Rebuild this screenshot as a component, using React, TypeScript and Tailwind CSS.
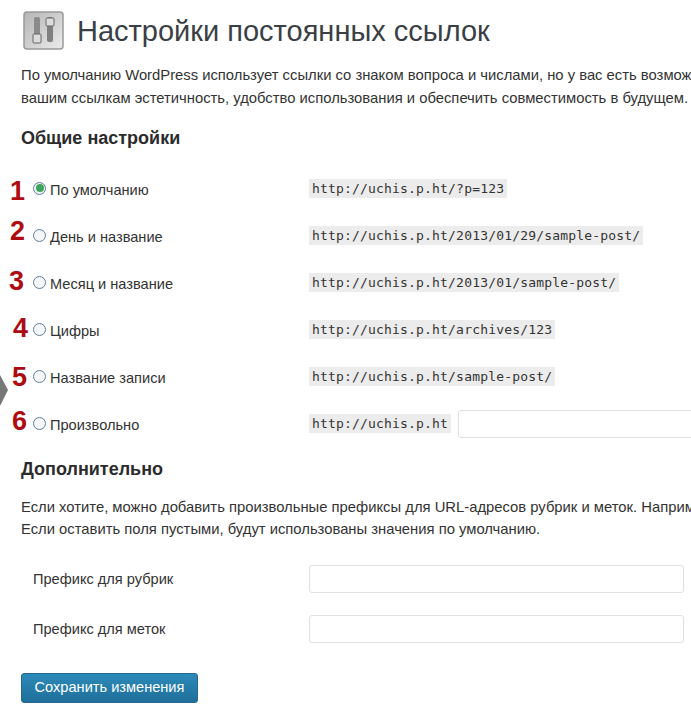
const rows = [
  { n: "1", numClass: "left-[10px] top-[7px]", label: "По умолчанию", url: "http://uchis.p.ht/?p=123", checked: true },
  { n: "2", numClass: "left-[10px] top-[0px]", label: "День и название", url: "http://uchis.p.ht/2013/01/29/sample-post/" },
  { n: "3", numClass: "left-[9px] top-[3px]", label: "Месяц и название", url: "http://uchis.p.ht/2013/01/sample-post/" },
  { n: "4", numClass: "left-[13px] top-[3px]", label: "Цифры", url: "http://uchis.p.ht/archives/123" },
  { n: "5", numClass: "left-[12px] top-[5px]", label: "Название записи", url: "http://uchis.p.ht/sample-post/" },
  { n: "6", numClass: "left-[12px] top-[2px]", label: "Произвольно", url: "http://uchis.p.ht", custom: true },
];

function SettingsIcon() {
  return (
    <svg width="42" height="39" viewBox="0 0 42 39" className="block">
      <defs>
        <linearGradient id="tile" x1="0" y1="0" x2="1" y2="1">
          <stop offset="0" stopColor="#b5b5b5" />
          <stop offset="0.5" stopColor="#cfcfcf" />
          <stop offset="1" stopColor="#ececec" />
        </linearGradient>
      </defs>
      <rect x="1" y="1" width="39" height="37" rx="3" fill="url(#tile)" stroke="#9b9b9b" strokeWidth="1.5" />
      <rect x="11" y="6" width="6" height="23" rx="2" fill="#8b8b8b" />
      <rect x="24" y="6" width="6" height="25" rx="2" fill="#7f7f7f" />
      <rect x="10" y="23" width="8" height="9" rx="1" fill="#dcdcdc" stroke="#666" />
      <rect x="23" y="7" width="8" height="8" rx="1" fill="#dcdcdc" stroke="#666" />
    </svg>
  );
}

function Radio({ checked }: { checked?: boolean }) {
  return (
    <span className="flex h-[13px] w-[13px] shrink-0 items-center justify-center rounded-full border border-[#5f7f99] bg-[#f4f6f8]">
      {checked && <span className="h-[8px] w-[8px] rounded-full bg-[#3fa45b]" />}
    </span>
  );
}

export default function App() {
  return (
    <div
      className="relative h-[725px] w-[691px] overflow-hidden bg-white text-[14.6px] text-[#333]"
      style={{ fontFamily: '"Liberation Sans", Arial, sans-serif' }}
    >
      <div className="flex items-center gap-[12px] pl-[23px] pt-[11px]">
        <SettingsIcon />
        <h1 className="whitespace-nowrap text-[29px] leading-[38px] text-[#3a3f46]">Настройки постоянных ссылок</h1>
      </div>

      <div className="mt-[14px] whitespace-nowrap pl-[21px] text-[14.8px] leading-[23px] text-[#333]">
        <p>По умолчанию WordPress использует ссылки со знаком вопроса и числами, но у вас есть возможность создать</p>
        <p>вашим ссылкам эстетичность, удобство использования и обеспечить совместимость в будущем.</p>
      </div>

      <h2 className="mt-[16px] pl-[21px] text-[18px] font-bold leading-[24px] text-[#2b2b2b]">Общие настройки</h2>

      <div className="mt-[15px]">
        {rows.map((r) => (
          <div key={r.n} className="relative flex h-[47px] items-center">
            <span className={`absolute text-[27px] font-bold leading-[38px] text-[#ad0c12] ${r.numClass}`}>{r.n}</span>
            <div className="flex w-[309px] shrink-0 items-center gap-[4px] pl-[33px]">
              <Radio checked={r.checked} />
              <span className="relative top-[2px] text-[#333]">{r.label}</span>
            </div>
            <code
              className="whitespace-nowrap bg-[#ececec] px-[3px] text-[13px] leading-[19px] tracking-[0.18px] text-[#333]"
              style={{ fontFamily: '"DejaVu Sans Mono", monospace' }}
            >
              {r.url}
            </code>
            {r.custom && (
              <div className="ml-[7px] mt-[1px] h-[28px] w-[300px] shrink-0 rounded-[3px] border border-[#dfdfdf] bg-white" />
            )}
          </div>
        ))}
      </div>

      <h2 className="mt-[10px] pl-[21px] text-[18px] font-bold leading-[24px] text-[#2b2b2b]">Дополнительно</h2>

      <div className="mt-[15px] whitespace-nowrap pl-[21px] text-[14.8px] leading-[22px] text-[#333]">
        <p>Если хотите, можно добавить произвольные префиксы для URL-адресов рубрик и меток. Например</p>
        <p>Если оставить поля пустыми, будут использованы значения по умолчанию.</p>
      </div>

      <div className="mt-[25px] flex flex-col gap-[22px]">
        {["Префикс для рубрик", "Префикс для меток"].map((label) => (
          <div key={label} className="flex h-[28px] items-center">
            <span className="relative top-[1px] w-[309px] shrink-0 pl-[33px]">{label}</span>
            <div className="h-[28px] w-[375px] shrink-0 rounded-[3px] border border-[#dfdfdf] bg-white" />
          </div>
        ))}
      </div>

      <button className="ml-[21px] mt-[30px] flex h-[30px] w-[177px] items-center justify-center rounded-[3px] border border-[#24688f] bg-gradient-to-b from-[#2d8ab9] to-[#1f6f9a] text-[14.6px] text-white">
        Сохранить изменения
      </button>

      {/* серая стрелка у левого края */}
      <div className="absolute left-0 top-[375px]">
        <svg width="9" height="31" viewBox="0 0 9 31" className="block">
          <polygon points="0,0 8,15 0,31" fill="#777" />
        </svg>
      </div>
    </div>
  );
}
